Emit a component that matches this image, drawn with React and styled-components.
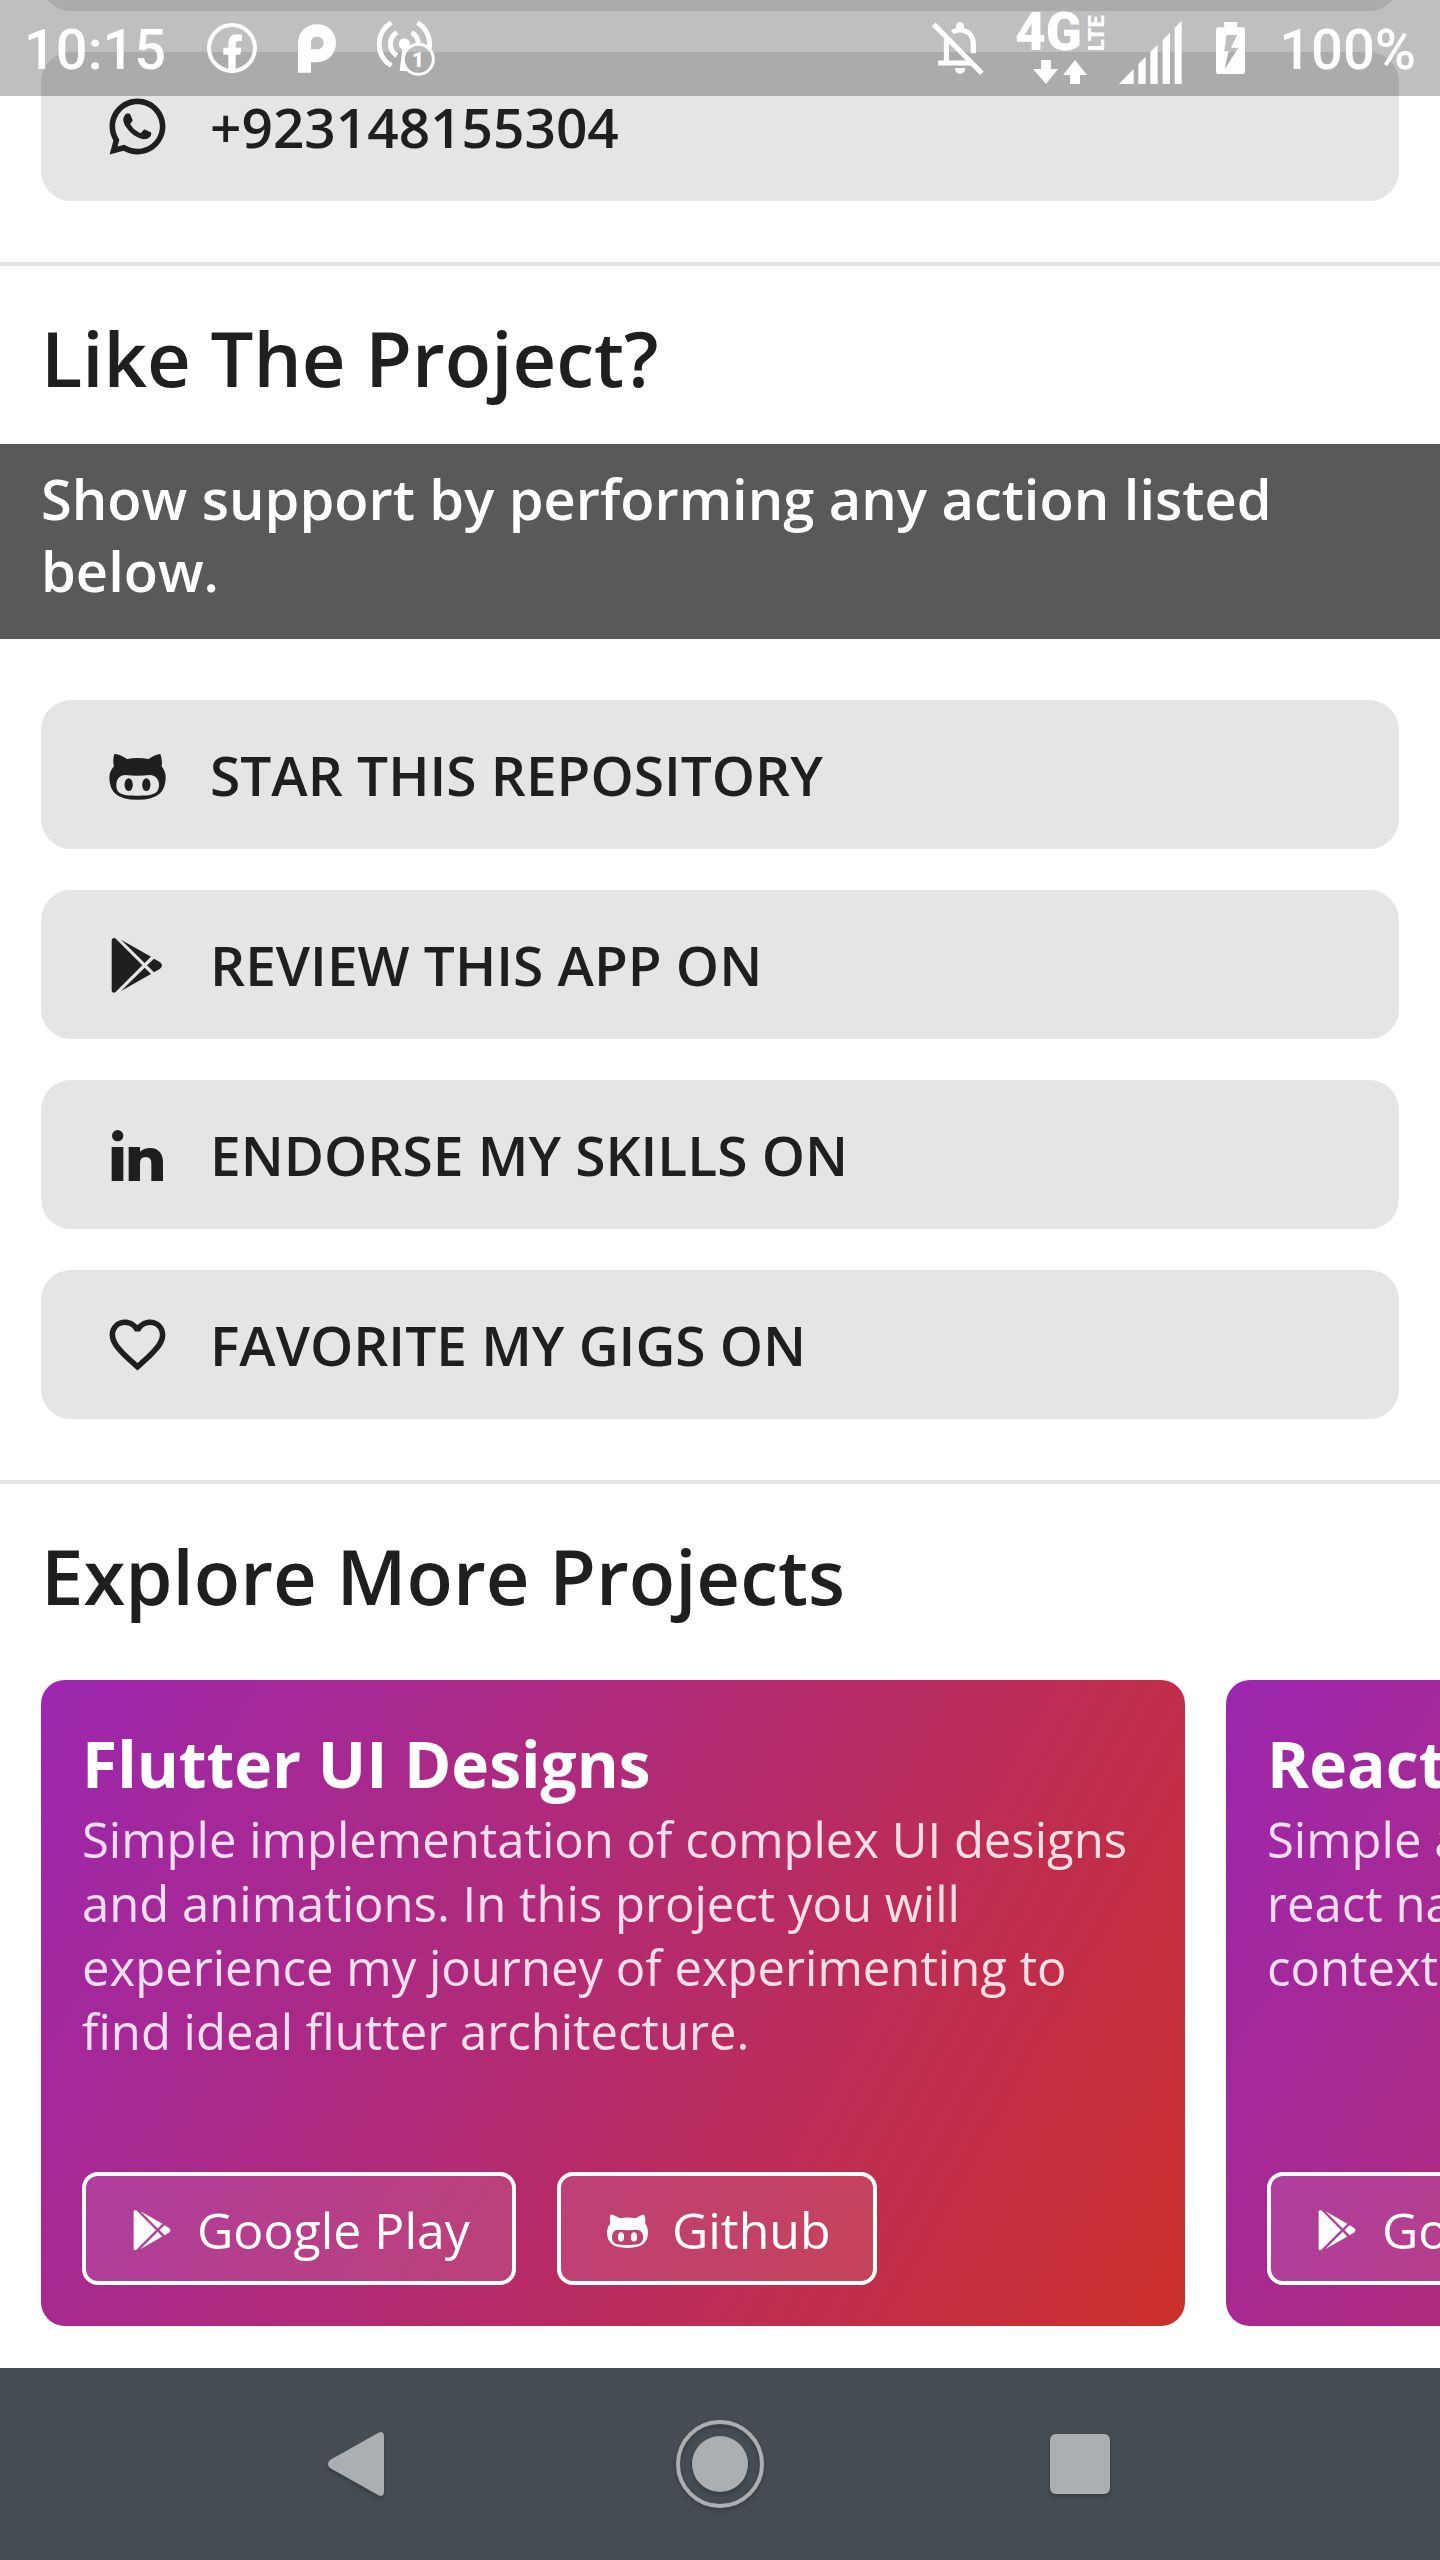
import React from "react";
import styled, { createGlobalStyle } from "styled-components";
import { RiWhatsappLine } from "react-icons/ri";
import { MdFavoriteBorder } from "react-icons/md";

const GlobalStyle = createGlobalStyle`
  *, *::before, *::after { box-sizing: border-box; }
  body {
    margin: 0;
    background: #fff;
    color: #1f1f1f;
    font-family: "Open Sans", "Noto Sans", sans-serif;
  }
`;

const Screen = styled.div`
  position: relative;
  display: flex;
  flex-direction: column;
  min-height: 100vh;
  overflow: hidden;
`;

/* ---------- status bar ---------- */

const StatusBar = styled.header`
  position: absolute;
  top: 0;
  left: 0;
  right: 0;
  z-index: 1;
  display: flex;
  align-items: center;
  justify-content: space-between;
  height: 96px;
  padding: 0 24px;
  background: rgba(0, 0, 0, 0.25);
  color: #fff;
`;

const StatusGroup = styled.div`
  display: flex;
  align-items: center;
  gap: ${(p) => p.$gap}px;

  svg {
    display: block;
    flex: none;
    overflow: visible;
  }
`;

const StatusText = styled.span`
  padding-top: 4px;
  font: 500 56px/64px Roboto, sans-serif;
`;

/* ---------- content ---------- */

const Main = styled.main`
  flex: 1;
`;

const Section = styled.section`
  border-bottom: ${(p) => (p.$last ? "0" : "4px solid #e5e5e5")};
`;

const Heading = styled.h2`
  margin: 0;
  padding: 42px 41px 36px;
  font-size: 76px;
  font-weight: 600;
  line-height: 100px;
`;

const Banner = styled.p`
  margin: 0;
  padding: 18px 41px 33px;
  background: #595959;
  color: #fff;
  font-size: 56px;
  font-weight: 600;
  line-height: 72px;
`;

const RowList = styled.div`
  display: flex;
  flex-direction: column;
  gap: 41px;
  margin-top: ${(p) => (p.$scrolled ? "-138px" : "0")};
  padding: ${(p) => (p.$scrolled ? "0" : "61px")} 41px 61px;
`;

const Row = styled.button`
  display: flex;
  align-items: center;
  gap: 39px;
  width: 100%;
  height: 149px;
  padding: 0 63px;
  border: 0;
  border-radius: 30px;
  background: #e5e5e5;
  color: inherit;
  font: inherit;
  font-size: 55px;
  font-weight: 600;
  line-height: 72px;
  text-align: left;

  svg {
    flex: none;
  }
`;

const RowShell = styled.div`
  height: 149px;
  border-radius: 30px;
  background: #e5e5e5;
`;

/* ---------- projects ---------- */

const Projects = styled.div`
  display: flex;
  gap: 41px;
  padding: 18px 41px 42px;
  overflow: hidden;
`;

const Card = styled.article`
  display: flex;
  flex: none;
  flex-direction: column;
  width: calc(100vw - 296px);
  min-height: 646px;
  padding: 41px;
  border-radius: 24px;
  background: linear-gradient(119.5deg, #9c27b0, #cc2f2a);
  color: #fff;
`;

const CardTitle = styled.h3`
  margin: 0;
  font-size: 64px;
  font-weight: 700;
  line-height: 86px;
`;

const CardText = styled.p`
  margin: 0;
  color: rgba(255, 255, 255, 0.85);
  font-size: 49px;
  line-height: 64px;
  white-space: pre-line;
`;

const CardActions = styled.div`
  display: flex;
  gap: 41px;
  margin-top: auto;
`;

const StoreButton = styled.button`
  display: flex;
  align-items: center;
  gap: 20px;
  height: 113px;
  padding: 2px 42px 0;
  border: 4px solid #fff;
  border-radius: 16px;
  background: rgba(255, 255, 255, 0.1);
  color: #fff;
  font: inherit;
  font-size: 50px;
  line-height: 64px;
  white-space: nowrap;

  svg {
    flex: none;
  }
`;

/* ---------- navigation bar ---------- */

const NavBar = styled.nav`
  display: grid;
  grid-template-columns: repeat(3, 1fr);
  height: 192px;
  padding: 0 12.5%;
  background: #454d52;
`;

const NavButton = styled.button`
  display: flex;
  align-items: center;
  justify-content: center;
  padding: 0;
  border: 0;
  background: none;
  color: #abafb2;

  svg {
    overflow: visible;
    filter: drop-shadow(0 3px 2px rgba(0, 0, 0, 0.2));
  }
`;

/* ---------- icons ---------- */

const GithubFace = ({ size = 67 }) => (
  <svg width={size} height={size} viewBox="311 183 201 201" fill="currentColor" aria-hidden="true">
    <path
      fillRule="evenodd"
      d="M345 222Q360 224 380 237Q411 231 445 237Q464 224 480 222Q487 240 484 259Q496 275 496 292Q496 325 478 341Q458 359 411 359Q364 359 345 341Q327 325 327 292Q327 275 341 259Q336 240 342 222ZM375 285C358 285 348 298 348 315C348 345 372 347 411 347C450 347 476 345 476 315C476 301 468 285 448 285Q411 289 375 285Z"
    />
    <ellipse cx="385" cy="314" rx="12.5" ry="19" />
    <ellipse cx="438" cy="314" rx="12.5" ry="19" />
  </svg>
);

const PlayLogo = ({ size = 67 }) => (
  <svg width={size} height={size} viewBox="311 753 201 201" fill="currentColor" aria-hidden="true">
    <path d="M334 780Q336 772 345 775L426 856L345 937Q336 941 334 933Z" />
    <path d="M362 779L452 830L433 849ZM362 933L452 882L433 863Z" />
    <path d="M461 836L478 846Q492 856 478 867L461 877L440 856Z" />
  </svg>
);

const LinkedinLogo = () => (
  <svg width="67" height="67" viewBox="311 180 201 201" fill="currentColor" aria-hidden="true">
    <circle cx="352" cy="224" r="17" />
    <rect x="334" y="258" width="35" height="102" />
    <path d="M385 258H419V272Q431 261 449 261C476 261 488 280 488 303V360H453V306Q453 288 436 288Q419 288 419 306V360H385Z" />
  </svg>
);

const FacebookIcon = () => (
  <svg width="50" height="50" viewBox="618 69 150 150" aria-hidden="true">
    <circle cx="693" cy="144" r="69" fill="none" stroke="#fff" strokeWidth="12" />
    <path fill="#fff" d="M682 211V164H667V143H682V129Q682 103 709 103Q717 103 723 105V123H713Q704 123 704 132V143H721L718 164H704V211Z" />
  </svg>
);

const PandoraIcon = () => (
  <svg width="38" height="49" viewBox="900 72 114 146" aria-hidden="true">
    <path
      fill="#fff"
      fillRule="evenodd"
      d="M900 218V128C900 95 925 72 957 72C990 72 1014 95 1014 128C1014 162 990 186 957 186H939V218ZM939 147V128C939 116 947 110 957 110C968 110 977 117 977 128C977 140 968 147 957 147Z"
    />
  </svg>
);

const HotspotIcon = () => (
  <svg width="58" height="56" viewBox="84 60 174 168" aria-hidden="true">
    <mask id="badge-cut">
      <rect x="84" y="60" width="174" height="168" fill="#fff" />
      <circle cx="208" cy="178" r="44" fill="#000" />
    </mask>
    <g mask="url(#badge-cut)">
      <g fill="none" stroke="#fff" strokeWidth="15">
        <path d="M127 68A75 75 0 0 0 127 197" />
        <path d="M144 97A41 41 0 0 0 144 167" />
        <path d="M205 68A75 75 0 0 1 205 197" />
        <path d="M188 97A41 41 0 0 1 188 167" />
      </g>
      <circle cx="166" cy="132" r="17" fill="#fff" />
      <path fill="#fff" d="M160 148L152 213H184V148Z" />
    </g>
    <circle cx="208" cy="178" r="45" fill="none" stroke="#fff" strokeWidth="9" />
    <text x="207" y="200" fill="#fff" fontFamily="Roboto, sans-serif" fontWeight="900" fontSize="62" textAnchor="middle">
      1
    </text>
  </svg>
);

const BellOffIcon = () => (
  <svg width="52" height="53" viewBox="93 68 151 160" preserveAspectRatio="none" aria-hidden="true">
    <g fill="none" stroke="#fff" strokeWidth="15">
      <path d="M98 75L238 223" />
      <path d="M135 116V190M111 192H212" />
      <path d="M152 99Q163 91 174 92C200 93 213 112 213 136V162" />
    </g>
    <path fill="#fff" d="M163 92V79Q164 68 174 68Q185 68 186 79V92ZM159 207H190Q187 225 174 225Q162 225 159 207Z" />
  </svg>
);

const NetworkIcon = () => (
  <svg width="87" height="72" viewBox="0 0 87 72" fill="#fff" role="img" aria-label="4G LTE">
    <text x="-3" y="38" fontFamily="Roboto, sans-serif" fontWeight="900" fontSize="53">
      4G
    </text>
    <text transform="translate(86 39) rotate(-90)" fontFamily="Roboto, sans-serif" fontWeight="900" fontSize="22">
      LTE
    </text>
    <path d="M23 48H33V57H40L28 72L15 57H23ZM57 48L69 63H62V72H52V63H45Z" />
  </svg>
);

const SignalIcon = () => (
  <svg width="63" height="72" viewBox="355 36 189 216" fill="#fff" aria-hidden="true">
    <path d="M355 252L399 207V252ZM413 252V192L435 170V252ZM449 252V156L471 134V252ZM486 252V120L508 98V252ZM522 252V84L543 62V252Z" />
  </svg>
);

const BatteryIcon = () => (
  <svg width="29" height="52" viewBox="920 66 85 156" preserveAspectRatio="none" aria-hidden="true">
    <path
      fill="#fff"
      fillRule="evenodd"
      d="M944 66H982V82H998Q1005 82 1005 89V215Q1005 222 998 222H927Q920 222 920 215V89Q920 82 927 82H944ZM951 105L944 154H957L945 208L986 143H964L982 105Z"
    />
  </svg>
);

/* ---------- data ---------- */

const supportRows = [
  { icon: <GithubFace />, label: "STAR THIS REPOSITORY" },
  { icon: <PlayLogo />, label: "REVIEW THIS APP ON" },
  { icon: <LinkedinLogo />, label: "ENDORSE MY SKILLS ON" },
  { icon: <MdFavoriteBorder size={67} />, label: "FAVORITE MY GIGS ON" },
];

const projects = [
  {
    title: "Flutter UI Designs",
    text: "Simple implementation of complex UI designs\nand animations. In this project you will\nexperience my journey of experimenting to\nfind ideal flutter architecture.",
    github: true,
  },
  {
    title: "React",
    text: "Simple app\nreact native\ncontexts",
    github: false,
  },
];

export default function App() {
  return (
    <Screen>
      <GlobalStyle />
      <StatusBar>
        <StatusGroup $gap={41}>
          <StatusText>10:15</StatusText>
          <FacebookIcon />
          <PandoraIcon />
          <HotspotIcon />
        </StatusGroup>
        <StatusGroup $gap={34}>
          <BellOffIcon />
          <StatusGroup $gap={14}>
            <NetworkIcon />
            <SignalIcon />
          </StatusGroup>
          <BatteryIcon />
          <StatusText>100%</StatusText>
        </StatusGroup>
      </StatusBar>

      <Main>
        <Section>
          <RowList $scrolled>
            <RowShell />
            <Row type="button">
              <RiWhatsappLine size={67} aria-hidden="true" />
              +923148155304
            </Row>
          </RowList>
        </Section>

        <Section>
          <Heading>Like The Project?</Heading>
          <Banner>Show support by performing any action listed below.</Banner>
          <RowList>
            {supportRows.map((row) => (
              <Row type="button" key={row.label}>
                {row.icon}
                {row.label}
              </Row>
            ))}
          </RowList>
        </Section>

        <Section $last>
          <Heading>Explore More Projects</Heading>
          <Projects>
            {projects.map((project) => (
              <Card key={project.title}>
                <CardTitle>{project.title}</CardTitle>
                <CardText>{project.text}</CardText>
                <CardActions>
                  <StoreButton type="button">
                    <PlayLogo size={49} />
                    Google Play
                  </StoreButton>
                  {project.github && (
                    <StoreButton type="button">
                      <GithubFace size={49} />
                      Github
                    </StoreButton>
                  )}
                </CardActions>
              </Card>
            ))}
          </Projects>
        </Section>
      </Main>

      <NavBar>
        <NavButton type="button" aria-label="Back">
          <svg width="64" height="64" viewBox="0 0 64 64" fill="currentColor">
            <path d="M2 28L50 1Q56 -2 56 5V59Q56 66 50 63L2 36Q-2 32 2 28Z" />
          </svg>
        </NavButton>
        <NavButton type="button" aria-label="Home">
          <svg width="88" height="88" viewBox="0 0 88 88">
            <circle cx="44" cy="44" r="42" fill="none" stroke="currentColor" strokeWidth="4" />
            <circle cx="44" cy="44" r="28" fill="currentColor" />
          </svg>
        </NavButton>
        <NavButton type="button" aria-label="Recent apps">
          <svg width="60" height="60" viewBox="0 0 60 60">
            <rect width="60" height="60" rx="6" fill="currentColor" />
          </svg>
        </NavButton>
      </NavBar>
    </Screen>
  );
}
